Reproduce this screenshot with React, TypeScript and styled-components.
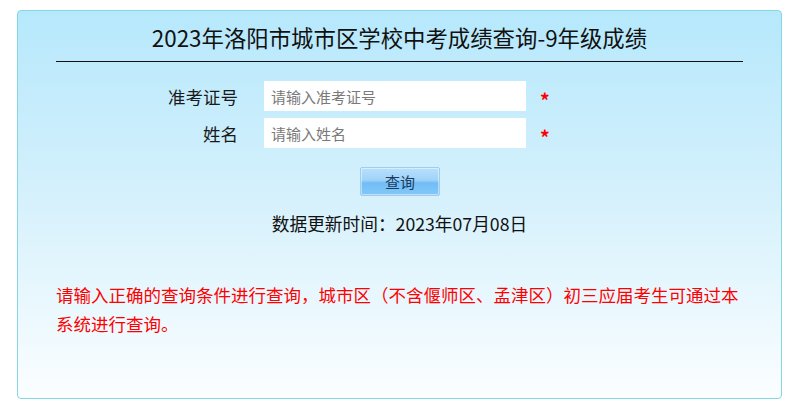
import React from 'react'
import styled, { createGlobalStyle } from 'styled-components'

const GlobalStyle = createGlobalStyle`
  html, body {
    margin: 0;
    padding: 0;
    background: #fff;
    font-family: "Noto Sans CJK SC", "Noto Sans", sans-serif;
  }
`

const Page = styled.div`
  padding: 10px 18px 10px 17px;
`

const Panel = styled.div`
  box-sizing: border-box;
  width: 765px;
  height: 389px;
  border: 1px solid #86d6e4;
  border-radius: 4px;
  background: linear-gradient(to bottom, #b6e8fc 0%, #d3f0fc 45%, #fbfeff 100%);
  padding: 0 38px 0 38px;
`

const Title = styled.h1`
  margin: 11px 0 0;
  padding-bottom: 9px;
  border-bottom: 1px solid #111;
  font-size: 22.4px;
  font-weight: normal;
  line-height: 30px;
  text-align: center;
  color: #111;
`

const Form = styled.div`
  display: flex;
  flex-direction: column;
  gap: 7px;
  margin-top: 19px;
`

const Row = styled.div`
  display: flex;
  align-items: center;
`

const Label = styled.label`
  width: 182px;
  text-align: right;
  font-size: 17.5px;
  color: #1a1a1a;
  margin-right: 26px;
`

const Input = styled.input`
  box-sizing: border-box;
  width: 262px;
  height: 30px;
  border: none;
  outline: none;
  padding: 0 7px;
  background: #fff;
  font-family: inherit;
  font-size: 15px;
  &::placeholder {
    color: #7a7a7a;
  }
`

const Star = styled.span`
  margin: 7px 0 0 14px;
  color: #ff0000;
  font-size: 19px;
  font-weight: bold;
  line-height: 1;
`

const Actions = styled.div`
  display: flex;
  justify-content: center;
  margin: 19px 0 0 1px;
`

const Button = styled.button`
  box-sizing: border-box;
  width: 80px;
  height: 29px;
  border: 1px solid #9fcdee;
  border-radius: 2px;
  background: linear-gradient(to bottom, #b9e0fb 0%, #9fd2f9 45%, #72bdf6 55%, #83c8f8 100%);
  box-shadow: inset 0 0 0 1px rgba(255, 255, 255, 0.45);
  font-family: inherit;
  font-size: 15px;
  color: #1c3b5c;
  padding: 0;
  cursor: pointer;
`

const Updated = styled.div`
  margin-top: 15px;
  text-align: center;
  font-size: 17.7px;
  line-height: 24px;
  color: #111;
`

const Notice = styled.p`
  margin: 45px 0 0;
  color: #ff0000;
  font-size: 17.5px;
  line-height: 29px;
`

export default function App() {
  return (
    <>
      <GlobalStyle />
      <Page>
        <Panel>
          <Title>2023年洛阳市城市区学校中考成绩查询-9年级成绩</Title>
          <Form>
            <Row>
              <Label>准考证号</Label>
              <Input placeholder="请输入准考证号" />
              <Star>*</Star>
            </Row>
            <Row>
              <Label>姓名</Label>
              <Input placeholder="请输入姓名" />
              <Star>*</Star>
            </Row>
          </Form>
          <Actions>
            <Button>查询</Button>
          </Actions>
          <Updated>数据更新时间：2023年07月08日</Updated>
          <Notice>
            请输入正确的查询条件进行查询，城市区（不含偃师区、孟津区）初三应届考生可通过本系统进行查询。
          </Notice>
        </Panel>
      </Page>
    </>
  )
}
